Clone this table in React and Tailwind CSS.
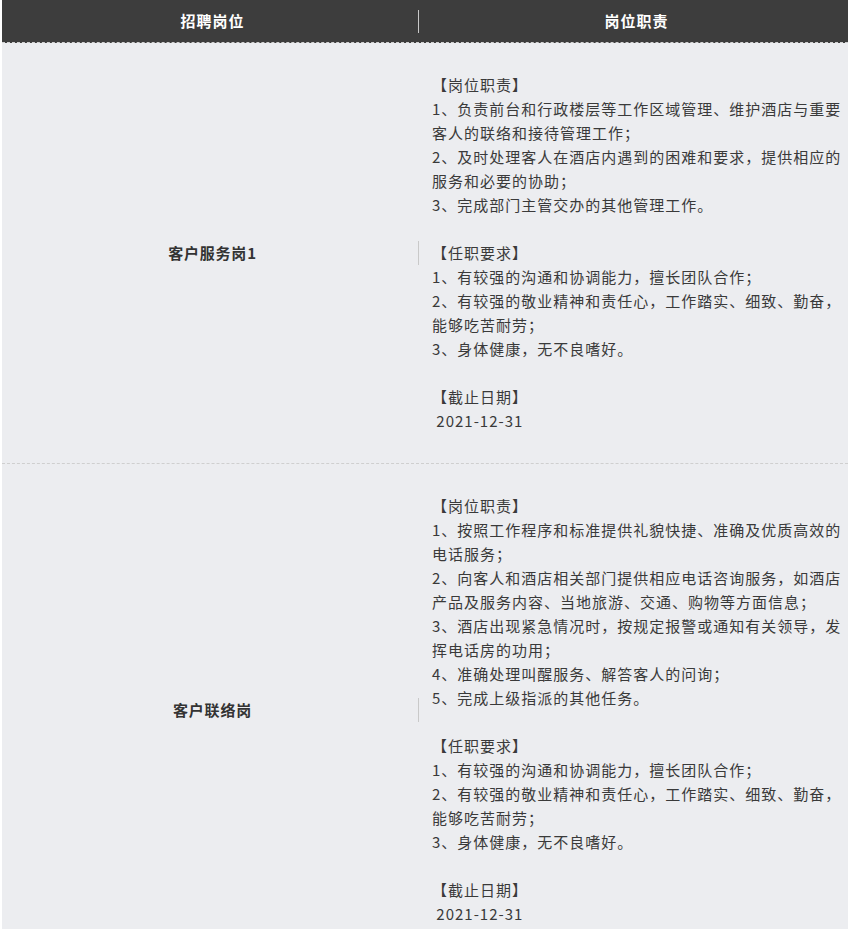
import React from "react";

const rows = [
  {
    title: "客户服务岗1",
    lines: [
      "【岗位职责】",
      "1、负责前台和行政楼层等工作区域管理、维护酒店与重要客人的联络和接待管理工作；",
      "2、及时处理客人在酒店内遇到的困难和要求，提供相应的服务和必要的协助；",
      "3、完成部门主管交办的其他管理工作。",
      "",
      "【任职要求】",
      "1、有较强的沟通和协调能力，擅长团队合作；",
      "2、有较强的敬业精神和责任心，工作踏实、细致、勤奋，能够吃苦耐劳；",
      "3、身体健康，无不良嗜好。",
      "",
      "【截止日期】",
      "\u00a02021-12-31",
    ],
  },
  {
    title: "客户联络岗",
    lines: [
      "【岗位职责】",
      "1、按照工作程序和标准提供礼貌快捷、准确及优质高效的电话服务；",
      "2、向客人和酒店相关部门提供相应电话咨询服务，如酒店产品及服务内容、当地旅游、交通、购物等方面信息；",
      "3、酒店出现紧急情况时，按规定报警或通知有关领导，发挥电话房的功用；",
      "4、准确处理叫醒服务、解答客人的问询；",
      "5、完成上级指派的其他任务。",
      "",
      "【任职要求】",
      "1、有较强的沟通和协调能力，擅长团队合作；",
      "2、有较强的敬业精神和责任心，工作踏实、细致、勤奋，能够吃苦耐劳；",
      "3、身体健康，无不良嗜好。",
      "",
      "【截止日期】",
      "\u00a02021-12-31",
    ],
  },
];

export default function App() {
  return (
    <div
      className="w-[849px] bg-white pl-[2px] pr-[1px]"
      style={{ fontFamily: '"Noto Sans CJK SC", "Microsoft YaHei", sans-serif' }}
    >
      <div className="flex h-[43px] items-center border-b border-dashed border-[#d0d0d0] bg-[#3d3d3d] text-[15px] font-bold tracking-[1px] text-white">
        <div className="w-[416px] pl-[5px] text-center">招聘岗位</div>
        <div className="h-[23px] w-px bg-[#c8c8c8]" />
        <div className="flex-1 pl-[6px] text-center">岗位职责</div>
      </div>
      {rows.map((row, i) => (
        <div
          key={i}
          className="flex items-center border-b border-dashed border-[#cfcfcf] bg-[#ecedf0]"
        >
          <div className="w-[416px] pl-[5px] text-center text-[15px] font-bold tracking-[0.8px] text-[#333]">
            {row.title}
          </div>
          <div className="h-[24px] w-px bg-[#c9c9c9]" />
          <div className="flex-1 py-[30px] pl-[13px] pr-px text-[15px] leading-[24px] tracking-[1px] text-[#3a3a3a]">
            {row.lines.map((l, j) => (
              <div key={j} className="min-h-[24px]">
                {l}
              </div>
            ))}
          </div>
        </div>
      ))}
    </div>
  );
}
